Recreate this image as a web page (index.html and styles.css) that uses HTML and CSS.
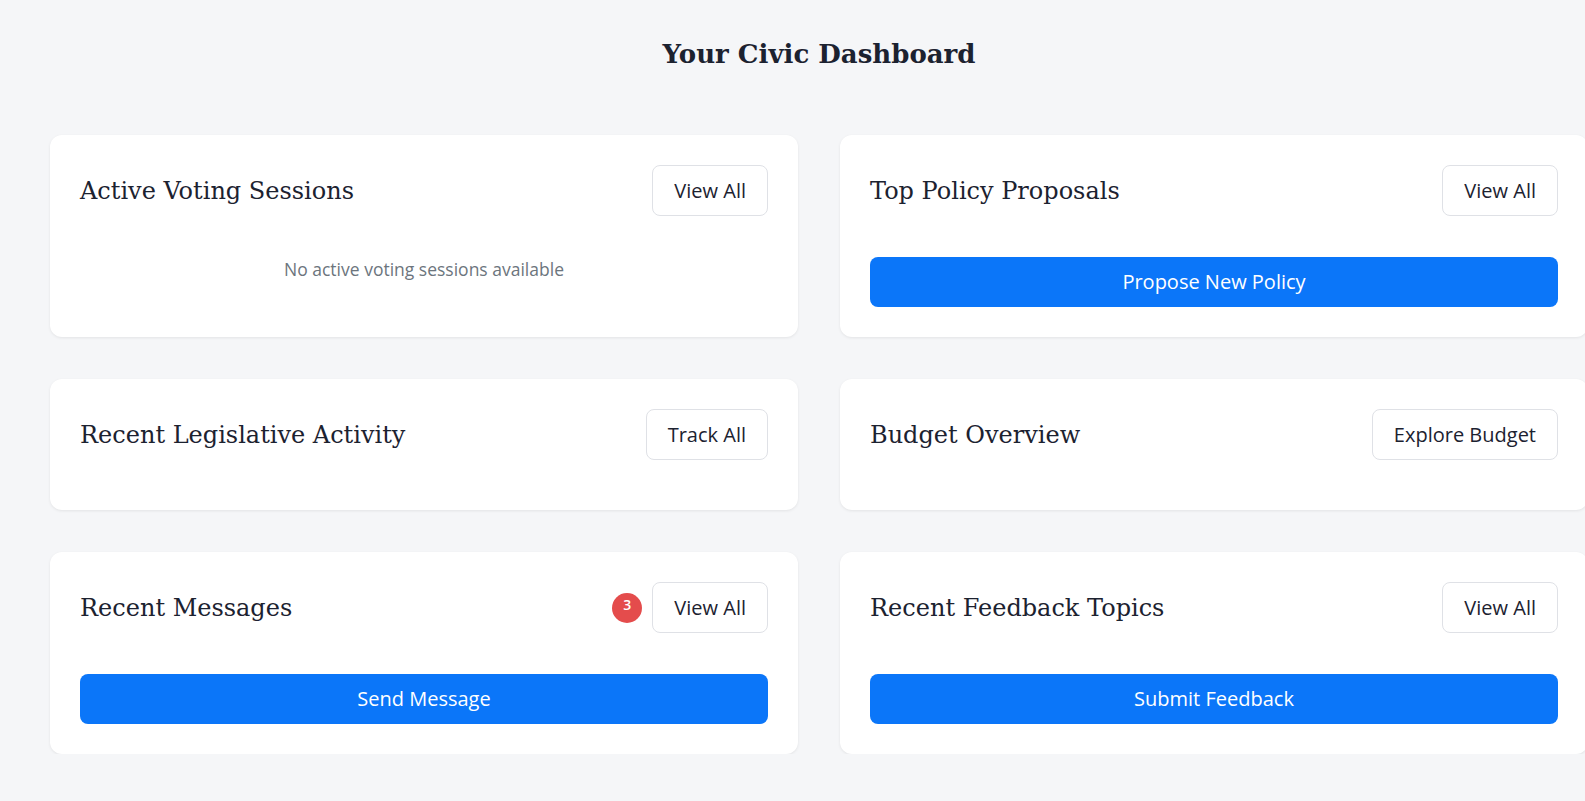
FILE: index.html
```html
<!DOCTYPE html>
<html lang="en">
<head>
    <meta charset="UTF-8">
    <meta name="viewport" content="width=device-width, initial-scale=1.0">
    <title>Your Civic Dashboard</title>
    <link rel="stylesheet" href="styles.css">
</head>
<body>
    <div class="page">
        <h1 class="page-title">Your Civic Dashboard</h1>

        <div class="grid">
            <!-- voting -->
            <div class="card">
                <div class="card-head">
                    <h2>Active Voting Sessions</h2>
                    <div class="head-actions">
                        <a class="btn-outline" href="#">View All</a>
                    </div>
                </div>
                <p class="empty">No active voting sessions available</p>
            </div>

            <!-- policies -->
            <div class="card">
                <div class="card-head">
                    <h2>Top Policy Proposals</h2>
                    <div class="head-actions">
                        <a class="btn-outline" href="#">View All</a>
                    </div>
                </div>
                <a class="btn-primary" href="#">Propose New Policy</a>
            </div>

            <!-- legislation -->
            <div class="card">
                <div class="card-head">
                    <h2>Recent Legislative Activity</h2>
                    <div class="head-actions">
                        <a class="btn-outline" href="#">Track All</a>
                    </div>
                </div>
                <div class="card-body"></div>
            </div>

            <!-- budget -->
            <div class="card">
                <div class="card-head">
                    <h2>Budget Overview</h2>
                    <div class="head-actions">
                        <a class="btn-outline" href="#">Explore Budget</a>
                    </div>
                </div>
                <div class="card-body"></div>
            </div>

            <!-- messages -->
            <div class="card">
                <div class="card-head">
                    <h2>Recent Messages</h2>
                    <div class="head-actions">
                        <span class="badge">3</span>
                        <a class="btn-outline" href="#">View All</a>
                    </div>
                </div>
                <a class="btn-primary" href="#">Send Message</a>
            </div>

            <!-- feedback -->
            <div class="card">
                <div class="card-head">
                    <h2>Recent Feedback Topics</h2>
                    <div class="head-actions">
                        <a class="btn-outline" href="#">View All</a>
                    </div>
                </div>
                <a class="btn-primary" href="#">Submit Feedback</a>
            </div>
        </div>
    </div>
</body>
</html>
```

FILE: styles.css
```css
*{
    margin: 0;
    padding: 0;
    box-sizing: border-box;
}
html, body{
    overflow: hidden;
}
body{
    background-color: #f5f6f8;
    font-family: "Open Sans", "Noto Sans", sans-serif;
    color: #212529;
}
.page{
    width: 1538px;
    margin-left: 50px;
    padding-top: 36px;
}
.page-title{
    font-family: "DejaVu Serif", "Liberation Serif", serif;
    font-size: 26px;
    font-weight: bold;
    line-height: 36px;
    text-align: center;
    color: #1c2230;
    margin-bottom: 63px;
}
.grid{
    display: grid;
    grid-template-columns: 1fr 1fr;
    column-gap: 42px;
    row-gap: 42px;
}
.card{
    display: flex;
    flex-direction: column;
    background-color: #fff;
    border-radius: 12px;
    padding: 30px;
    box-shadow: 0 1px 3px rgba(0,0,0,.08);
}
.card-head{
    display: flex;
    align-items: center;
    justify-content: space-between;
    margin-bottom: 20px;
}
.card-head h2{
    font-family: "DejaVu Serif", "Liberation Serif", serif;
    font-size: 24px;
    font-weight: normal;
    color: #1c2230;
}
.head-actions{
    display: flex;
    align-items: center;
    gap: 10px;
}
.btn-outline{
    display: inline-block;
    font-size: 20px;
    line-height: 27px;
    padding: 11px 21px;
    border: 1px solid #dfe1e6;
    border-radius: 8px;
    color: #1c2230;
    text-decoration: none;
    background-color: #fff;
}
.badge{
    width: 30px;
    height: 30px;
    border-radius: 50%;
    background-color: #e44c4c;
    color: #fff;
    font-size: 14px;
    font-weight: 600;
    text-align: center;
    line-height: 24px;
}
.empty{
    font-size: 17.5px;
    line-height: 26px;
    color: #6c757d;
    text-align: center;
    padding: 20px 0 25px;
}
.card-body{
    min-height: 0;
}
.btn-primary{
    display: block;
    margin-top: 21px;
    background-color: #0b76f9;
    color: #fff;
    text-align: center;
    text-decoration: none;
    font-size: 20px;
    line-height: 28px;
    padding: 11px 0;
    border-radius: 8px;
}
```
